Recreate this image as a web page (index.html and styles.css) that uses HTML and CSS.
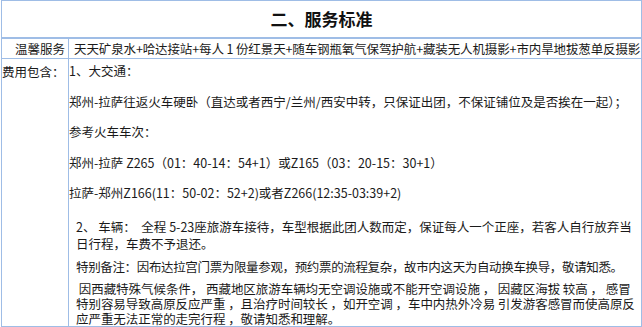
FILE: index.html
```html
<!DOCTYPE html>
<html lang="zh-CN">
<head>
<meta charset="utf-8">
<title>服务标准</title>
<link rel="stylesheet" href="styles.css">
</head>
<body>
<table class="svc">
  <colgroup>
    <col class="col-label">
    <col class="col-main">
  </colgroup>
  <tr class="title-row">
    <td colspan="2" class="title">二、服务标准</td>
  </tr>
  <tr class="warm-row">
    <td class="label label-right">温馨服务</td>
    <td class="warm">天天矿泉水+哈达接站+每人 1 份红景天+随车钢瓶氧气保驾护航+藏装无人机摄影+市内旱地拔葱单反摄影</td>
  </tr>
  <tr class="fee-row">
    <td class="label label-top">费用包含：</td>
    <td class="content">
      <p class="tr">1、大交通：</p>
      <p class="tr">郑州-拉萨往返火车硬卧（直达或者西宁/兰州/西安中转，只保证出团，不保证铺位及是否挨在一起）；</p>
      <p class="tr">参考火车车次：</p>
      <p class="tr">郑州-拉萨 Z265（01：40-14：54+1）或Z165（03：20-15：30+1）</p>
      <p class="tr">拉萨-郑州Z166(11：50-02：52+2)或者Z266(12:35-03:39+2)</p>
      <div class="car">
        <p class="car-p">2、 车辆：&nbsp;&nbsp;全程 5-23座旅游车接待，车型根据此团人数而定，保证每人一个正座，若客人自行放弃当日行程，车费不予退还。</p>
        <p class="note">特别备注：因布达拉宫门票为限量参观，预约票的流程复杂，故市内这天为自动换车换导，敬请知悉。</p>
        <p class="climate">&nbsp;因西藏特殊气候条件， 西藏地区旅游车辆均无空调设施或不能开空调设施 ， 因藏区海拔 较高 ， 感冒特别容易导致高原反应严重 ，且治疗时间较长 ，如开空调 ，车中内热外冷易 引发游客感冒而使高原反应严重无法正常的走完行程 ，敬请知悉和理解。</p>
      </div>
    </td>
  </tr>
</table>
</body>
</html>
```
FILE: styles.css
```css
html, body {
  margin: 0;
  padding: 0;
  background: #ffffff;
}
body {
  font-family: "Noto Sans CJK SC", "Noto Sans", sans-serif;
  font-size: 12.5px;
  color: #1a1a1a;
  overflow: hidden;
  height: 327px;
}
.svc {
  margin-left: 1px;
  width: 641px;
  border-collapse: collapse;
  table-layout: fixed;
}
.col-label {
  width: 67px;
}
.svc td {
  border: 1px solid #9fbde6;
  padding: 0;
  vertical-align: middle;
}
.title-row td {
  border-bottom: 2px solid #9fbde6;
}
.title {
  height: 36px;
  text-align: center;
  font-size: 17px;
  font-weight: bold;
  color: #111;
  padding-top: 3px;
  line-height: 22px;
}
.label {
  white-space: nowrap;
  overflow: visible;
}
.label-right {
  text-align: right;
  padding-right: 3px !important;
}
.label-top {
  vertical-align: top !important;
  padding-top: 4px !important;
  line-height: 18px;
}
.warm-row td {
  height: 19px;
  line-height: 19px;
}
.warm {
  padding-left: 5px !important;
  white-space: nowrap;
  letter-spacing: -0.12px;
}
.content {
  vertical-align: top !important;
  padding: 3px 0 0 0 !important;
}
.tr {
  margin: 0 0 12.6px 0;
  line-height: 18px;
}
.car {
  padding: 3px 6px 0 7px;
}
.car p {
  margin: 0;
}
.car-p {
  line-height: 17px;
}
.note {
  margin-top: 6px !important;
  line-height: 17px;
  letter-spacing: -0.35px;
}
.climate {
  margin-top: 6px !important;
  line-height: 15px;
  letter-spacing: -0.05px;
}
```
